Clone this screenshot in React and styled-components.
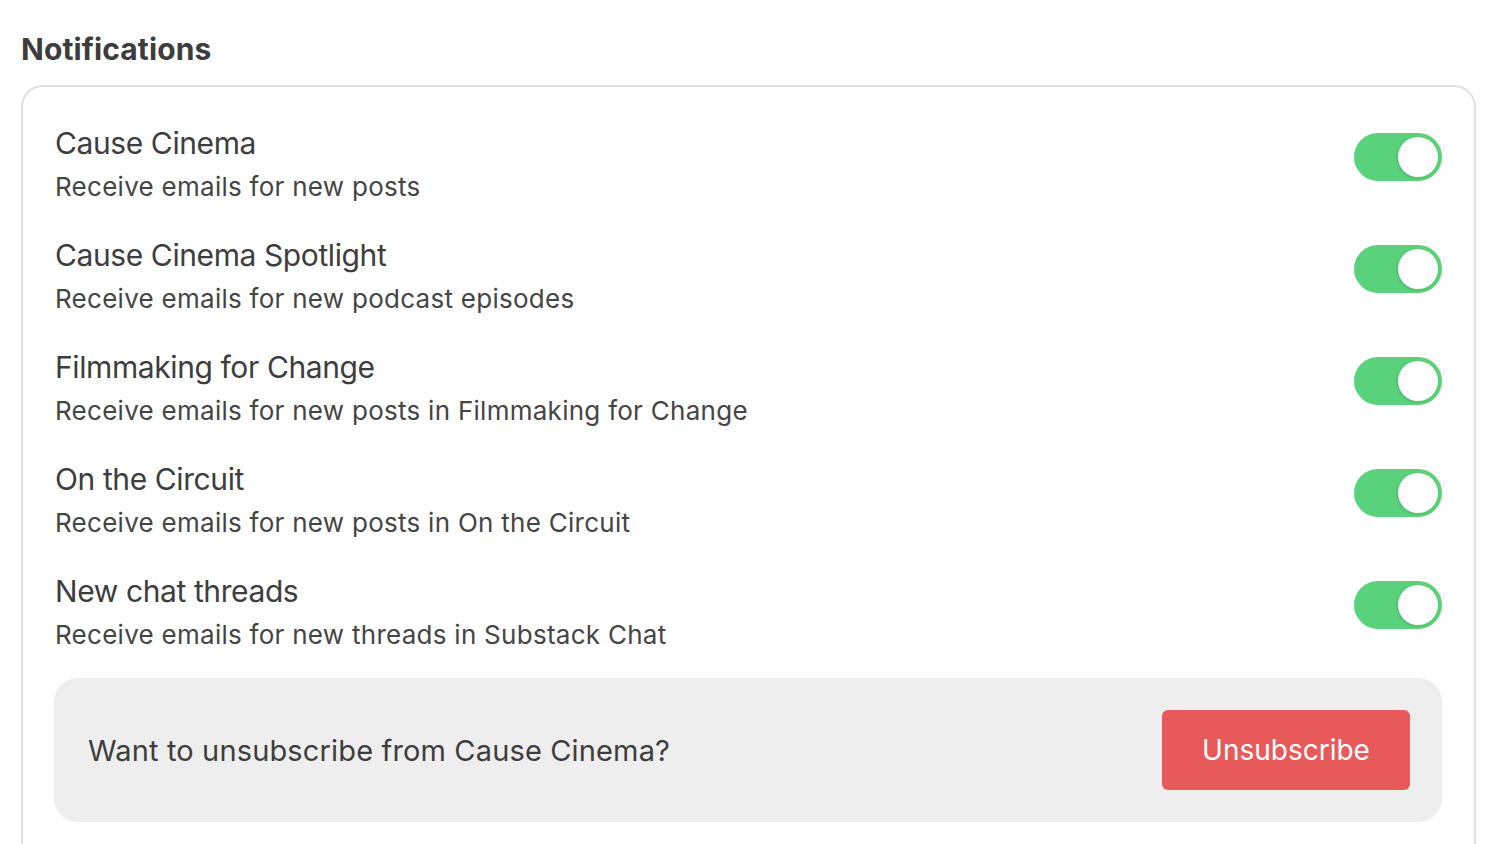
import React, { useState } from 'react';
import styled, { createGlobalStyle } from 'styled-components';

const GlobalStyle = createGlobalStyle`
  html, body {
    margin: 0;
    padding: 0;
    background: #fff;
    font-family: Inter, "Noto Sans", "Liberation Sans", sans-serif;
    color: #404040;
  }
`;

const Page = styled.div`
  padding: 31px 24.5px 0 21px;
  height: 844px;
  box-sizing: border-box;
  overflow: hidden;
`;

const Heading = styled.h2`
  margin: 0 0 18px;
  font-size: 30px;
  line-height: 36px;
  font-weight: 700;
  color: #3d3d3d;
  letter-spacing: 0.1px;
`;

const Card = styled.div`
  border: 2px solid #e0e0e0;
  border-radius: 22px;
  padding: 34px 31.5px 40px 31px;
  display: flex;
  flex-direction: column;
  gap: 24px;
`;

const Row = styled.div`
  display: flex;
  align-items: flex-start;
  justify-content: space-between;
`;

const TextGroup = styled.div`
  display: flex;
  flex-direction: column;
  padding-left: 1px;
`;

const Title = styled.div`
  font-size: 30px;
  line-height: 44px;
  color: #3d3d3d;
  letter-spacing: -0.4px;
`;

const Subtitle = styled.div`
  font-size: 26px;
  line-height: 44px;
  color: #454545;
  letter-spacing: 0.27px;
`;

const Toggle = styled.button`
  width: 88px;
  height: 48px;
  margin-top: 12px;
  border: none;
  border-radius: 24px;
  padding: 4px;
  background: ${(p) => (p.$on ? '#5ad17b' : '#d8d8d8')};
  display: flex;
  justify-content: ${(p) => (p.$on ? 'flex-end' : 'flex-start')};
  cursor: pointer;
`;

const Knob = styled.span`
  width: 40px;
  height: 40px;
  border-radius: 50%;
  background: #fff;
  box-shadow: -1px 1px 3px rgba(0, 0, 0, 0.12);
`;

const UnsubBox = styled.div`
  margin-top: -3px;
  background: #eeeeee;
  border-radius: 24px;
  padding: 32px 32px 32px 34px;
  display: flex;
  align-items: center;
  justify-content: space-between;
`;

const UnsubText = styled.span`
  font-size: 29px;
  color: #3d3d3d;
  letter-spacing: 0.15px;
`;

const UnsubButton = styled.button`
  width: 248px;
  height: 80px;
  border: none;
  border-radius: 6px;
  background: #e85959;
  color: #fff;
  font-family: inherit;
  font-size: 28px;
  cursor: pointer;
`;

const items = [
  { title: 'Cause Cinema', sub: 'Receive emails for new posts' },
  { title: 'Cause Cinema Spotlight', sub: 'Receive emails for new podcast episodes' },
  { title: 'Filmmaking for Change', sub: 'Receive emails for new posts in Filmmaking for Change' },
  { title: 'On the Circuit', sub: 'Receive emails for new posts in On the Circuit' },
  { title: 'New chat threads', sub: 'Receive emails for new threads in Substack Chat' },
];

export default function App() {
  const [state, setState] = useState(items.map(() => true));

  const flip = (i) => setState(state.map((v, j) => (j === i ? !v : v)));

  return (
    <>
      <GlobalStyle />
      <Page>
        <Heading>Notifications</Heading>
        <Card>
          {items.map((it, i) => (
            <Row key={it.title}>
              <TextGroup>
                <Title>{it.title}</Title>
                <Subtitle>{it.sub}</Subtitle>
              </TextGroup>
              <Toggle $on={state[i]} onClick={() => flip(i)}>
                <Knob />
              </Toggle>
            </Row>
          ))}
          <UnsubBox>
            <UnsubText>Want to unsubscribe from Cause Cinema?</UnsubText>
            <UnsubButton>Unsubscribe</UnsubButton>
          </UnsubBox>
        </Card>
      </Page>
    </>
  );
}
